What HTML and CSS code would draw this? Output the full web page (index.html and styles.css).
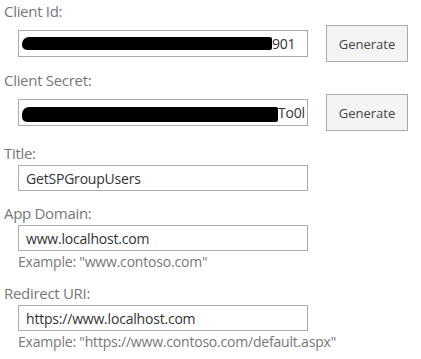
FILE: index.html
```html
<!DOCTYPE html>
<html>
<head>
<meta charset="utf-8">
<link rel="stylesheet" href="styles.css">
</head>
<body>
<div class="form">
  <div class="field first">
    <div class="label">Client Id:</div>
    <div class="row">
      <div class="input"><span class="redact r1"></span><span class="tail">901</span></div>
      <div class="btn">Generate</div>
    </div>
  </div>
  <div class="field">
    <div class="label">Client Secret:</div>
    <div class="row">
      <div class="input"><span class="redact r2"></span><span class="tail">To0l</span></div>
      <div class="btn">Generate</div>
    </div>
  </div>
  <div class="field plain">
    <div class="label">Title:</div>
    <div class="input">GetSPGroupUsers</div>
  </div>
  <div class="field plain">
    <div class="label">App Domain:</div>
    <div class="input">www.localhost.com</div>
    <div class="hint">Example: "www.contoso.com"</div>
  </div>
  <div class="field plain">
    <div class="label">Redirect URI:</div>
    <div class="input">https://www.localhost.com</div>
    <div class="hint">Example: "https://www.contoso.com/default.aspx"</div>
  </div>
</div>
</body>
</html>
```
FILE: styles.css
```css
html, body {
  margin: 0;
  padding: 0;
  background: #ffffff;
}
body {
  font-family: "Open Sans", "Noto Sans", sans-serif;
  color: #444444;
}
.form {
  display: flex;
  flex-direction: column;
  padding: 1px 0 0 4px;
}
.field {
  display: flex;
  flex-direction: column;
  margin-top: 8px;
}
.field.first {
  margin-top: 0;
}
.field.plain {
  margin-top: 12px;
}
.label {
  font-size: 15px;
  line-height: 20px;
  color: #777777;
  letter-spacing: -0.3px;
}
.row {
  display: flex;
  align-items: center;
  margin-top: 4px;
  height: 37px;
}
.input {
  box-sizing: border-box;
  width: 290px;
  height: 27px;
  margin-left: 14px;
  border: 1px solid #ababab;
  background: #ffffff;
  font-size: 14px;
  line-height: 25px;
  padding: 0 0 0 7px;
  color: #333333;
  white-space: nowrap;
  overflow: hidden;
  display: flex;
  align-items: center;
  letter-spacing: -0.2px;
}
.field.plain .input {
  margin-top: 2px;
  height: 26px;
}
.redact {
  display: inline-block;
  background: #000000;
  height: 13px;
  border-radius: 7px 2px 2px 5px;
  margin-left: -4px;
  flex: none;
}
.r1 { width: 250px; }
.r2 { width: 256px; height: 15px; margin-top: 4px; }
.tail {
  flex: none;
}
.btn {
  box-sizing: border-box;
  width: 82px;
  height: 37px;
  margin-left: 18px;
  border: 1px solid #ababab;
  background: #f4f4f4;
  font-size: 13px;
  color: #444444;
  display: flex;
  align-items: center;
  justify-content: center;
}
.hint {
  margin-left: 14px;
  font-size: 14px;
  line-height: 18px;
  margin-top: 2px;
  color: #777777;
  letter-spacing: -0.2px;
}
```
